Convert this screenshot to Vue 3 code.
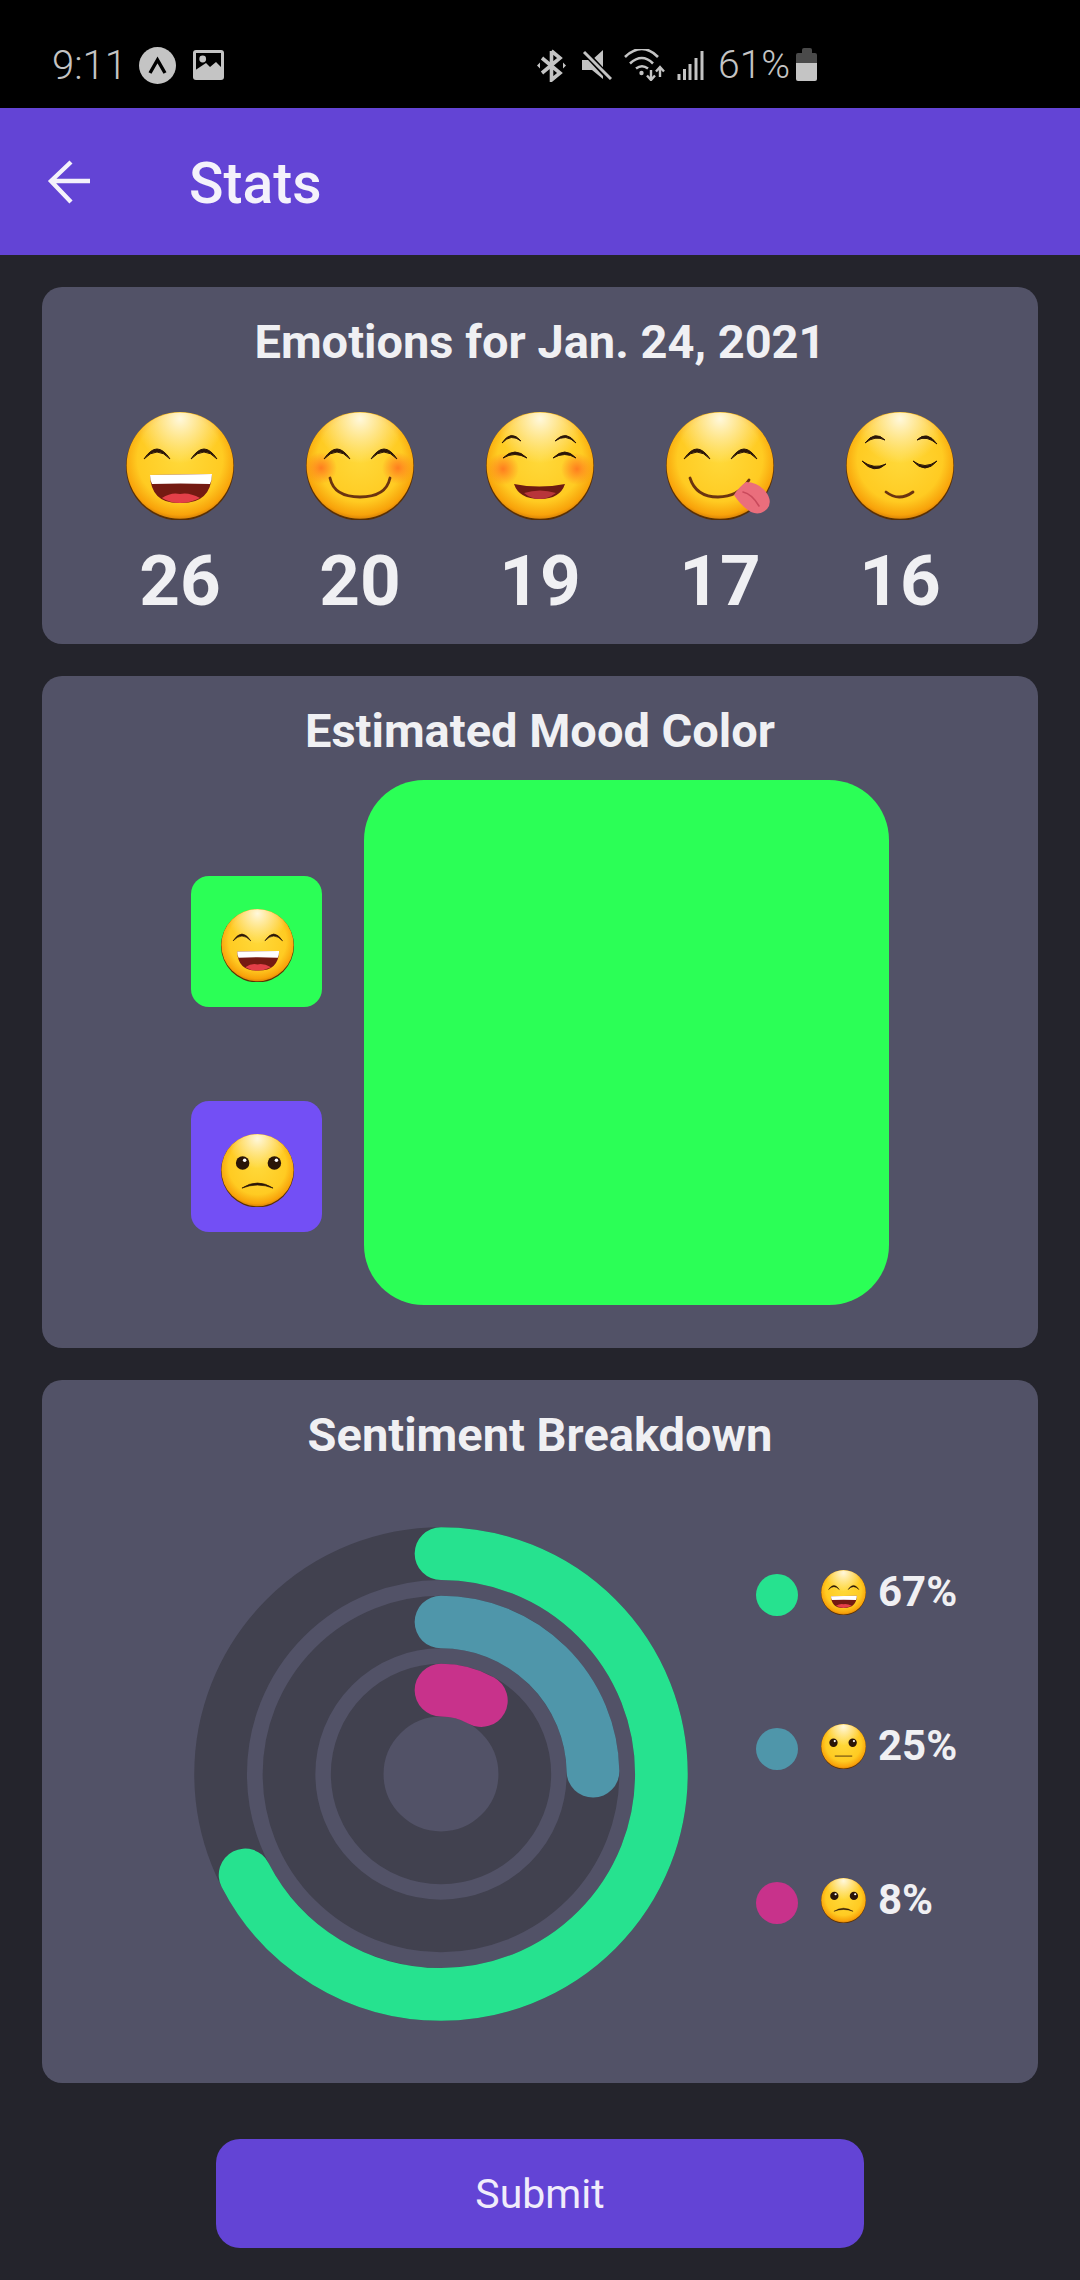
<template>
  <div class="screen">
    <svg class="defs" width="0" height="0" aria-hidden="true">
      <defs>
        <radialGradient id="faceFill" cx="50%" cy="44%" r="57%">
          <stop offset="0" stop-color="#ffd93a" />
          <stop offset="0.7" stop-color="#ffcb22" />
          <stop offset="0.92" stop-color="#f8a20a" />
          <stop offset="1" stop-color="#d47c06" />
        </radialGradient>
        <radialGradient id="faceShine" cx="50%" cy="6%" r="42%">
          <stop offset="0" stop-color="#fff8dc" stop-opacity="1" />
          <stop offset="1" stop-color="#fff6d0" stop-opacity="0" />
        </radialGradient>
        <radialGradient id="blush">
          <stop offset="0" stop-color="#ff7a1f" stop-opacity="0.95" />
          <stop offset="1" stop-color="#ff7a1f" stop-opacity="0" />
        </radialGradient>
        <symbol id="face" viewBox="0 0 108 108">
          <circle cx="54" cy="54.600" r="54" fill="#5a3004" />
          <circle cx="54" cy="53.400" r="53.400" fill="url(#faceFill)" />
          <circle cx="54" cy="53.400" r="53" fill="url(#faceShine)" />
        </symbol>
        <symbol id="e-grin" viewBox="0 0 108 108">
          <use href="#face" width="108" height="108" />
          <path class="eye" d="M18 47Q31 27 44 47Q31 33 18 47ZM65 47Q78 27 91 47Q78 33 65 47Z" />
          <path d="M24 63L86 62Q85 92 54 91Q25 92 24 63Z" fill="#741a12" />
          <path d="M24 63L86 62Q86 68 84 72Q54 71 26 72Q24 68 24 63Z" fill="#fff" />
          <path d="M36 86Q45 80 54 82Q63 80 74 86Q64 91 54 91Q44 91 36 86Z" fill="#e33f48" />
        </symbol>
        <symbol id="e-smile" viewBox="0 0 108 108">
          <use href="#face" width="108" height="108" />
          <circle cx="15" cy="56" r="16" fill="url(#blush)" />
          <circle cx="92" cy="56" r="16" fill="url(#blush)" />
          <path class="eye" d="M18 47Q31 27 44 47Q31 33 18 47ZM65 47Q78 27 91 47Q78 33 65 47Z" />
          <path class="lip" d="M24 66Q28 85 54 85Q80 85 84 66" />
        </symbol>
        <symbol id="e-blush" viewBox="0 0 108 108">
          <use href="#face" width="108" height="108" />
          <circle cx="17" cy="57" r="16" fill="url(#blush)" />
          <circle cx="91" cy="57" r="16" fill="url(#blush)" />
          <path class="eye" d="M16 31Q25 17 35 29Q25 21 16 31ZM69 29Q80 17 90 31Q80 21 69 29Z" />
          <path class="eye" d="M17 46Q29 34 41 46Q29 39 17 46ZM67 46Q79 34 90 46Q79 39 67 46Z" />
          <path d="M28 72Q53 77 79 72Q74 87 54 87Q33 87 28 72Z" fill="#6e1a12" />
          <path d="M38 81Q54 76 70 81Q62 87 54 87Q45 87 38 81Z" fill="#b8353a" />
        </symbol>
        <symbol id="e-yum" viewBox="0 0 108 108">
          <use href="#face" width="108" height="108" />
          <path class="eye" d="M18 47Q31 27 44 47Q31 33 18 47ZM65 47Q78 27 91 47Q78 33 65 47Z" />
          <path class="lip" d="M24 66Q30 85 52 85Q72 85 83 68" />
          <path d="M68 83Q72 76 80 70Q92 70 100 80Q107 90 101 97Q94 104 85 100Q75 94 68 83Z" fill="#ea6e7c" />
          <path d="M77 80Q86 82 93 94" fill="none" stroke="#c94a5c" stroke-width="1.600" stroke-linecap="round" />
        </symbol>
        <symbol id="e-calm" viewBox="0 0 108 108">
          <use href="#face" width="108" height="108" />
          <path class="eye" d="M19 31Q29 18 39 28Q29 23 19 31ZM71 28Q81 18 91 32Q81 23 71 28Z" />
          <path class="eye" d="M16 49Q28 63 40 52Q28 58 16 49ZM67 49Q79 63 91 49Q79 58 67 49Z" />
          <path class="lip" d="M40 80Q53 90 67 80" />
        </symbol>
        <symbol id="e-neutral" viewBox="0 0 108 108">
          <use href="#face" width="108" height="108" />
          <circle cx="30" cy="45" r="10" fill="#2a1508" />
          <circle cx="76" cy="45" r="10" fill="#2a1508" />
          <circle cx="33" cy="41" r="2.600" fill="#fff" />
          <circle cx="79" cy="41" r="2.600" fill="#fff" />
          <path class="thin" d="M34 77H74" />
        </symbol>
        <symbol id="e-sad" viewBox="0 0 108 108">
          <use href="#face" width="108" height="108" />
          <circle cx="32" cy="43" r="10" fill="#2a1508" />
          <circle cx="79" cy="43" r="10" fill="#2a1508" />
          <circle cx="35" cy="39" r="2.600" fill="#fff" />
          <circle cx="82" cy="39" r="2.600" fill="#fff" />
          <path class="eye" d="M31 80Q54 65 77 80Q54 71 31 80Z" />
        </symbol>
      </defs>
    </svg>

    <div class="status-bar">
      <span class="time">9:11</span>
      <svg class="ic-a" viewBox="0 0 37 37">
        <circle cx="18.500" cy="18.500" r="18.500" fill="#c4c4c4" />
        <path d="M11 26L18.500 13L26 26" fill="none" stroke="#000" stroke-width="3.400" />
      </svg>
      <svg class="ic-img" viewBox="0 0 31 30">
        <rect width="31" height="30" rx="3" fill="#c4c4c4" />
        <rect x="3" y="3" width="25" height="17" fill="#000" />
        <circle cx="9.700" cy="9" r="3.400" fill="#c4c4c4" />
        <path d="M1 21L13 13L17 17L23 12L30 19V26H1Z" fill="#c4c4c4" />
      </svg>
      <svg class="ic-bt" viewBox="0 0 29 33">
        <path d="M14.500 2V31L23 24L5 9M14.500 2L23 9L5 24" fill="none" stroke="#c4c4c4" stroke-width="3.600" />
        <path d="M0 16.500L3 13.500V19.500ZM29 16.500L26 13.500V19.500Z" fill="#c4c4c4" />
      </svg>
      <svg class="ic-mute" viewBox="0 0 30 30">
        <path d="M0 10H10L21 0V29L10 20H0Z" fill="#c4c4c4" />
        <path d="M0 -1L27 28" stroke="#000" stroke-width="6" />
        <path d="M2 2L29 29" stroke="#c4c4c4" stroke-width="3" />
      </svg>
      <svg class="ic-wifi" viewBox="0 0 42 32">
        <path d="M1 8Q18-8 34 8M6 14.500Q18 3.500 29 14.500M12 19.500Q18 15 24 19.500" fill="none" stroke="#c4c4c4" stroke-width="2.600" />
        <circle cx="17.500" cy="24" r="2.200" fill="#c4c4c4" />
        <path d="M27 21V30M23 26.500L27 31L31 26.500M36 28V19M32 22.500L36 18L40 22.500" fill="none" stroke="#c4c4c4" stroke-width="2.400" />
      </svg>
      <svg class="ic-signal" viewBox="0 0 27 29">
        <path d="M2 29V23M7.500 29V18M13 29V13M19 29V7M25 29V0" stroke="#c4c4c4" stroke-width="3" />
      </svg>
      <span class="battery-text">61%</span>
      <div class="battery">
        <div class="battery-cap"></div>
        <div class="battery-top"></div>
        <div class="battery-fill"></div>
      </div>
    </div>

    <header class="app-bar">
      <svg class="back" viewBox="0 0 44 44">
        <path d="M43 21H5M24 2L4 21L24 42" fill="none" stroke="#f4f2fb" stroke-width="4.400" />
      </svg>
      <span class="app-title">Stats</span>
    </header>

    <main class="content">
      <section class="card card-emotions">
        <h2>Emotions for Jan. 24, 2021</h2>
        <div class="emotions">
          <div v-for="e in emotions" :key="e.icon" class="emotion">
            <svg class="emoji-lg"><use :href="'#' + e.icon" width="108" height="108" /></svg>
            <span class="count">{{ e.count }}</span>
          </div>
        </div>
      </section>

      <section class="card card-mood">
        <h2>Estimated Mood Color</h2>
        <div class="mood-row">
          <div class="mood-side">
            <div class="mood-box green"><svg class="emoji-md"><use href="#e-grin" width="73" height="73" /></svg></div>
            <div class="mood-box purple"><svg class="emoji-md"><use href="#e-sad" width="73" height="73" /></svg></div>
          </div>
          <div class="mood-main"></div>
        </div>
      </section>

      <section class="card card-sentiment">
        <h2>Sentiment Breakdown</h2>
        <div class="sentiment-row">
          <svg class="donut" viewBox="0 0 494 494">
            <g v-for="r in rings" :key="r.color">
              <circle cx="247" cy="247" :r="r.radius" fill="none" stroke="#41414f" stroke-width="52.700" />
              <circle
                cx="247"
                cy="247"
                :r="r.radius"
                fill="none"
                :stroke="r.color"
                stroke-width="52.700"
                stroke-linecap="round"
                :stroke-dasharray="dash(r)"
                transform="rotate(-90 247 247)"
              />
            </g>
          </svg>
          <ul class="legend">
            <li v-for="r in rings" :key="r.color">
              <span class="dot" :style="{ background: r.color }"></span>
              <svg class="emoji-sm"><use :href="'#' + r.icon" width="45" height="45" /></svg>
              <span class="pct">{{ r.pct }}%</span>
            </li>
          </ul>
        </div>
      </section>

      <button class="submit">Submit</button>
    </main>
  </div>
</template>

<script setup>
const emotions = [
  { icon: 'e-grin', count: 26 },
  { icon: 'e-smile', count: 20 },
  { icon: 'e-blush', count: 19 },
  { icon: 'e-yum', count: 17 },
  { icon: 'e-calm', count: 16 }
];
const rings = [
  { color: '#26e28f', radius: 220.4, pct: 67, value: 67.4, icon: 'e-grin' },
  { color: '#4f96aa', radius: 152, pct: 25, value: 24.7, icon: 'e-neutral' },
  { color: '#c8328b', radius: 83.8, pct: 8, value: 8, icon: 'e-sad' }
];
const dash = (r) => {
  const full = 2 * Math.PI * r.radius;
  return `${(full * r.value) / 100} ${full}`;
};
</script>

<style>
html, body { margin: 0; background: #24242c; }
</style>

<style scoped>
.screen { width: 1080px; height: 2280px; background: #24242c; font-family: Roboto, "Liberation Sans", sans-serif; color: #f0f0f3; overflow: hidden; }
.defs { position: absolute; }
.eye { fill: #2a1508; stroke: #2a1508; stroke-width: 1; stroke-linejoin: round; }
.thin { fill: none; stroke: #3a1f08; stroke-width: 2; stroke-linecap: round; }
.lip { fill: none; stroke: #6b3410; stroke-width: 2.8; stroke-linecap: round; }

.status-bar { height: 108px; background: #000; display: flex; align-items: center; color: #c4c4c4; font-size: 39px; font-weight: 300; padding: 22px 0 0 52px; box-sizing: border-box; }
.time { width: 87px; font-size: 40px; }
.ic-a { width: 37px; height: 37px; margin-right: 17px; }
.ic-img { width: 31px; height: 30px; margin-right: 313px; }
.ic-bt { width: 29px; height: 33px; margin-right: 16px; }
.ic-mute { width: 30px; height: 30px; margin-right: 12px; }
.ic-wifi { width: 42px; height: 32px; margin-right: 11px; }
.ic-signal { width: 27px; height: 29px; margin-right: 14px; }
.battery-text { width: 78px; }
.battery { width: 21px; height: 33px; display: flex; flex-direction: column; align-items: center; margin-top: -1px; }
.battery-cap { width: 10px; height: 5px; background: #4a4a4a; border-radius: 2px 2px 0 0; }
.battery-top { width: 21px; height: 10px; background: #4a4a4a; border-radius: 2px 2px 0 0; }
.battery-fill { width: 21px; height: 18px; background: #c4c4c4; border-radius: 0 0 2px 2px; }

.app-bar { height: 147px; background: #6344d5; display: flex; align-items: center; padding-left: 47px; box-sizing: border-box; }
.back { width: 44px; height: 44px; margin-right: 98px; }
.app-title { font-size: 57px; font-weight: 500; color: #f4f2fb; margin-top: 4px; }

.content { padding: 32px 42px 0; display: flex; flex-direction: column; align-items: stretch; }
.card { background: #525267; border-radius: 20px; margin-bottom: 32px; padding-top: 28px; box-sizing: border-box; }
h2 { margin: 0; font-size: 47px; font-weight: 700; line-height: 54px; text-align: center; }

.card-emotions { height: 357px; }
.emotions { display: grid; grid-template-columns: repeat(5, 180px); justify-content: center; margin-top: 43px; }
.emotion { display: flex; flex-direction: column; align-items: center; }
.emoji-lg { width: 108px; height: 108px; overflow: visible; }
.count { font-size: 71px; font-weight: 700; line-height: 80px; margin-top: 21px; }

.card-mood { height: 672px; }
.mood-row { display: flex; padding-left: 149px; margin-top: 22px; }
.mood-side { width: 131px; margin-right: 42px; padding-top: 96px; display: flex; flex-direction: column; gap: 94px; }
.mood-box { width: 131px; height: 131px; border-radius: 18px; display: flex; align-items: center; justify-content: center; }
.mood-box.green { background: #2bff56; }
.mood-box.purple { background: #734ff5; }
.emoji-md { width: 73px; height: 73px; overflow: visible; margin: 8px 0 0 2px; }
.mood-main { width: 525px; height: 525px; border-radius: 60px; background: #2bff56; }

.card-sentiment { height: 703px; }
.sentiment-row { display: flex; align-items: flex-start; padding-left: 152px; margin-top: 65px; }
.donut { width: 494px; height: 494px; flex: none; }
.legend { list-style: none; margin: 47px 0 0 68px; padding: 0; display: flex; flex-direction: column; gap: 112px; }
.legend li { display: flex; align-items: center; height: 42px; }
.dot { width: 42px; height: 42px; border-radius: 50%; margin-right: 23px; }
.emoji-sm { width: 45px; height: 45px; margin-right: 12px; margin-top: -6px; overflow: visible; }
.pct { font-size: 42px; font-weight: 700; margin-top: -7px; }

.submit { align-self: center; width: 648px; height: 109px; margin-top: 24px; border: none; border-radius: 24px; background: #6344d5; color: #f0ecfb; font-family: inherit; font-size: 41px; }
</style>
